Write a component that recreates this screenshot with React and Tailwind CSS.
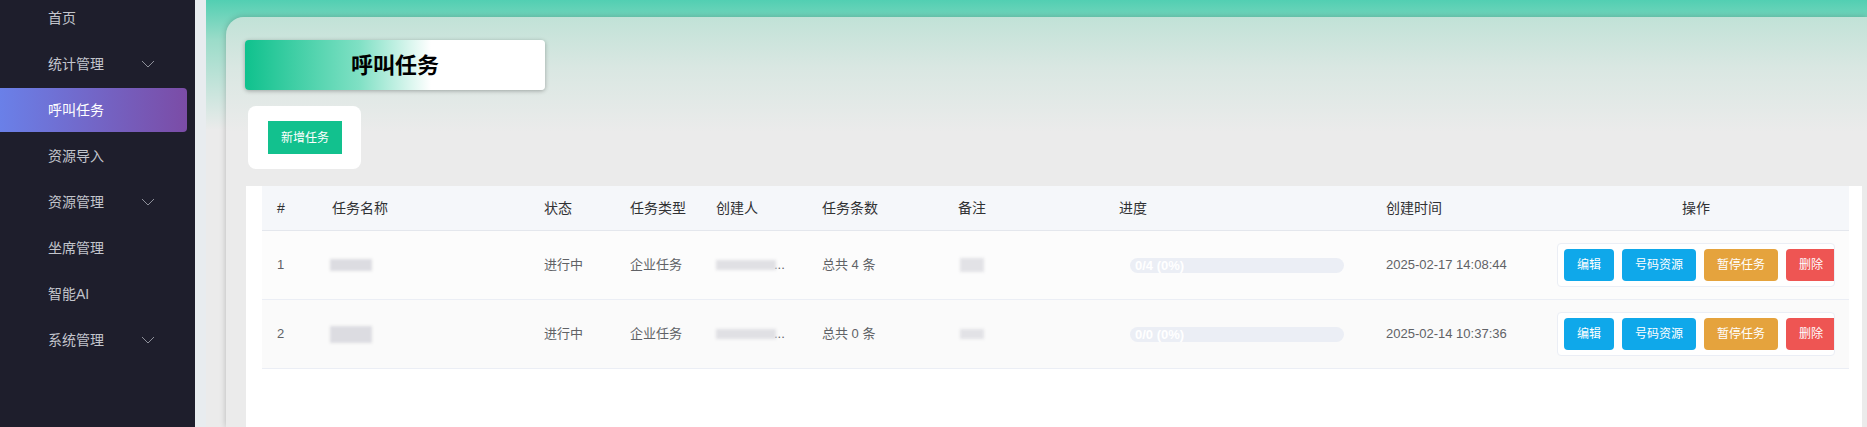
import React from "react";

const menu = [
  { label: "首页" },
  { label: "统计管理", sub: true },
  { label: "呼叫任务", active: true },
  { label: "资源导入" },
  { label: "资源管理", sub: true },
  { label: "坐席管理" },
  { label: "智能AI" },
  { label: "系统管理", sub: true },
];

const rows = [
  { id: 1, count: "总共 4 条", progress: "0/4 (0%)", time: "2025-02-17 14:08:44" },
  { id: 2, count: "总共 0 条", progress: "0/0 (0%)", time: "2025-02-14 10:37:36" },
];

const cols = "grid grid-cols-[55px_212px_86px_86px_106px_136px_161px_267px_172px_306px]";

function Chevron() {
  return (
    <svg width="14" height="8" viewBox="0 0 14 8" fill="none">
      <polyline points="1,1 7,7 13,1" stroke="#8e909a" strokeWidth="1" />
    </svg>
  );
}

// blurred placeholder for masked data
function Blur({ w, h = 12, tone = "bg-[#dcdce1]" }) {
  return <span className={`block ${tone} blur-[1.5px]`} style={{ width: w, height: h }} />;
}

function Sidebar() {
  return (
    <aside className="w-[195px] shrink-0 bg-[#1e1e2c] flex flex-col">
      <div className="-mt-1 flex flex-col gap-[2px]">
        {menu.map((m) => (
          <div
            key={m.label}
            className={`h-[44px] w-[187px] flex items-center justify-between pl-[48px] pr-[32px] rounded-r-[4px] text-[14px] ${
              m.active
                ? "bg-[linear-gradient(to_right,#6a80e8,#7b4ca6)] text-white"
                : "text-[#c3c5cc]"
            }`}
          >
            <span>{m.label}</span>
            {m.sub && <Chevron />}
          </div>
        ))}
      </div>
    </aside>
  );
}

function ActionButtons() {
  return (
    <div className="w-[278px] h-[44px] flex items-center gap-[8px] pl-[6px] bg-white border border-[#ebeef5] rounded-[4px] overflow-hidden text-[12px] text-white">
      <button className="w-[50px] h-[32px] shrink-0 rounded-[4px] bg-[#0fa8ea]">编辑</button>
      <button className="w-[74px] h-[32px] shrink-0 rounded-[4px] bg-[#0fa8ea]">号码资源</button>
      <button className="w-[74px] h-[32px] shrink-0 rounded-[4px] bg-[#e5a33d]">暂停任务</button>
      <button className="w-[56px] h-[32px] shrink-0 rounded-l-[4px] bg-[#ee5553] pr-[6px]">删除</button>
    </div>
  );
}

function TaskTable() {
  return (
    <div className="w-[1587px]">
      <div className={`${cols} h-[45px] items-center bg-[#f5f7fa] border-b border-[#e4e7ed] text-[14px] text-[#303133]`}>
        <div className="px-[15px]">#</div>
        <div className="px-[15px]">任务名称</div>
        <div className="px-[15px]">状态</div>
        <div className="px-[15px]">任务类型</div>
        <div className="px-[15px]">创建人</div>
        <div className="px-[15px]">任务条数</div>
        <div className="px-[15px]">备注</div>
        <div className="px-[15px]">进度</div>
        <div className="px-[15px]">创建时间</div>
        <div className="px-[15px] text-center">操作</div>
      </div>

      {rows.map((r, i) => (
        <div
          key={r.id}
          className={`${cols} h-[69px] items-center border-b border-[#ebeef5] text-[13px] text-[#606266] ${
            i === 0 ? "bg-[#fcfcfc]" : "bg-[#fafafa]"
          }`}
        >
          <div className="px-[15px]">{r.id}</div>
          <div className="px-[13px]">
            <Blur w={42} h={i === 0 ? 12 : 17} />
          </div>
          <div className="px-[15px]">进行中</div>
          <div className="px-[15px]">企业任务</div>
          <div className="px-[15px] flex items-center">
            <Blur w={60} h={10} tone="bg-[#e0e0e4]" />
            <span className="-ml-[2px]">...</span>
          </div>
          <div className="px-[15px]">{r.count}</div>
          <div className="px-[17px]">
            <Blur w={24} h={i === 0 ? 14 : 10} tone="bg-[#e2e2e6]" />
          </div>
          <div className="pl-[26px]">
            <div className="w-[214px] h-[15px] rounded-full bg-[#ebeef5] pl-[5px] text-[13px] leading-[15px] font-bold text-white">
              {r.progress}
            </div>
          </div>
          <div className="px-[15px]">{r.time}</div>
          <div className="pl-[14px]">
            <ActionButtons />
          </div>
        </div>
      ))}
    </div>
  );
}

export default function App() {
  return (
    <div
      className="flex h-[427px] w-[1867px] overflow-hidden"
      style={{ fontFamily: '"Liberation Sans", "Noto Sans CJK SC", sans-serif' }}
    >
      <Sidebar />
      <div className="w-[11px] shrink-0 bg-[#e8ecef]" />

      <main className="flex-1 min-w-0 bg-[linear-gradient(to_bottom,#52cfb2_0px,#9bdcc9_40px,#ebebeb_130px)] pt-[17px] pl-[20px]">
        <div className="h-full rounded-tl-[18px] shadow-[0_0_6px_rgba(0,0,0,0.22)] bg-[linear-gradient(to_bottom,#c1e2d7_0px,#d9e7e2_50px,#ebebeb_115px)] pl-[19px] pt-[23px] pr-[5px] flex flex-col">
          {/* title banner */}
          <div className="w-[300px] h-[50px] shrink-0 rounded-[4px] shadow-[0_1px_4px_rgba(0,0,0,0.3)] bg-[linear-gradient(to_right,#0fc18d_0%,#7fe0c4_38%,#ffffff_62%,#ffffff_100%)] flex items-center justify-center">
            <h1 className="text-[22px] font-bold text-black">呼叫任务</h1>
          </div>

          {/* add */}
          <div className="mt-[16px] ml-[3px] w-[113px] h-[63px] shrink-0 rounded-[8px] bg-white pl-[20px] pt-[15px]">
            <button className="w-[74px] h-[33px] bg-[#12c18e] text-white text-[12px]">新增任务</button>
          </div>

          {/* list */}
          <div className="mt-[17px] ml-[1px] flex-1 bg-white pl-[16px] pr-[13px]">
            <TaskTable />
          </div>
        </div>
      </main>
    </div>
  );
}
